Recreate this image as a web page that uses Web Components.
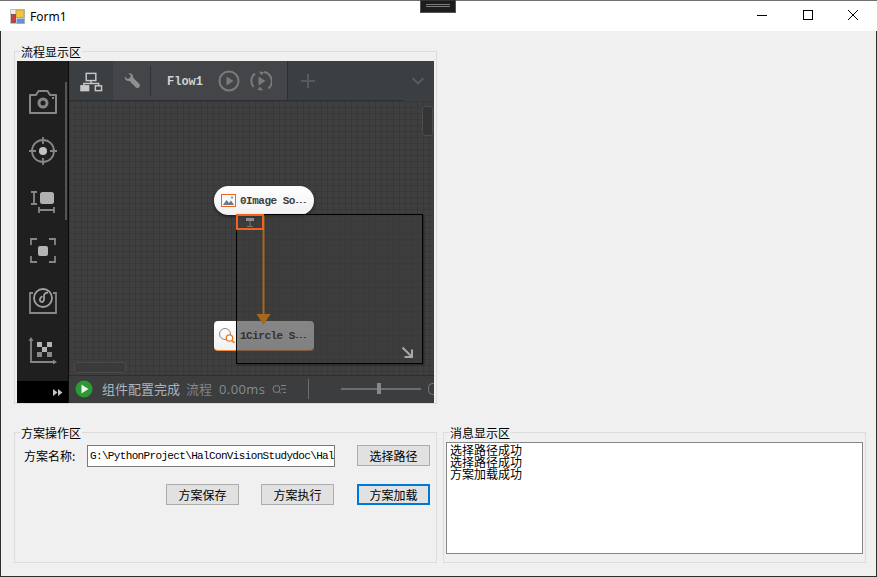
<!DOCTYPE html>
<html>
<head>
<meta charset="utf-8">
<title>Form1</title>
<style>
  html, body { margin: 0; padding: 0; width: 877px; height: 577px; overflow: hidden; background: #f0f0f0; }
  body { font: 12px "Noto Sans CJK SC", "Liberation Sans", sans-serif; color: #000; }
</style>
</head>
<body>
<form-window>
  <group-box slot="flow" label="流程显示区" style="width:421px;height:351px">
    <flow-panel></flow-panel>
  </group-box>
  <group-box slot="ops" label="方案操作区" style="width:421px;height:129px">
    <plan-form></plan-form>
  </group-box>
  <group-box slot="log" label="消息显示区" style="width:421px;height:129px">
    <message-box></message-box>
  </group-box>
</form-window>

<script>
class FormWindow extends HTMLElement {
  constructor() {
    super();
    const shadow = this.attachShadow({ mode: 'open' });
    shadow.innerHTML = `
      <style>
        :host {
          display: flex;
          flex-direction: column;
          box-sizing: border-box;
          width: 877px;
          height: 577px;
          background: #f0f0f0;
          border: solid #2e2e2e;
          border-width: 0 1px 1px 1px;
          position: relative;
        }
        .title {
          display: flex;
          align-items: center;
          height: 30px;
          background: #fff;
          border-top: 1px solid #707070;
          margin: 0 -1px 0 -1px;
          padding: 0 1px 0 10px;
          flex: none;
        }
        .title svg.logo { width: 15px; height: 15px; flex: none; }
        .title span {
          margin-left: 5px;
          font: 12px "Noto Sans", "Liberation Sans", sans-serif;
          color: #000;
          flex: 1;
        }
        .caps { display: flex; }
        .caps div { width: 46px; height: 28px; padding-bottom: 2px; display: flex; align-items: center; justify-content: center; }
        .caps div:nth-child(2) { width: 45px; }
        .caps svg { width: 12px; height: 12px; }
        .notch {
          position: absolute;
          left: 419px;
          top: 0;
          width: 34px;
          height: 11px;
          background: #1d1d1d;
          border: 1px solid #555;
          border-top-color: #333;
        }
        .notch i { display: block; height: 1px; background: #7d7d7d; margin: 3px 5px 0 5px; }
        .notch i + i { margin-top: 1px; }
        .top { padding: 20px 0 0 13px; flex: none; }
        .bottom { display: flex; padding: 28px 0 0 13px; gap: 6px; }
      </style>
      <div class="title">
        <svg class="logo" viewBox="0 0 15 15">
          <rect x="0.5" y="0.5" width="14" height="14" fill="#ececec" stroke="#c4c4c4"/>
          <rect x="6" y="1" width="8" height="7.500" fill="#f3c53a" stroke="#b99a4a" stroke-width="0.800"/>
          <rect x="1.500" y="5.500" width="4" height="8" fill="#c8403a" stroke="#8a3a36" stroke-width="0.800"/>
          <rect x="7" y="10" width="7" height="4" fill="#5f92dc" stroke="#6f8fc0" stroke-width="0.800"/>
        </svg>
        <span>Form1</span>
        <div class="caps">
          <div><svg viewBox="0 0 12 12"><path d="M1 6.500h10" stroke="#000" fill="none"/></svg></div>
          <div><svg viewBox="0 0 12 12"><rect x="1.500" y="1.500" width="9" height="9" stroke="#000" fill="none"/></svg></div>
          <div><svg viewBox="0 0 12 12"><path d="M1 1l10 10M11 1L1 11" stroke="#000" fill="none"/></svg></div>
        </div>
      </div>
      <div class="notch"><i></i><i></i></div>
      <div class="top"><slot name="flow"></slot></div>
      <div class="bottom"><slot name="ops"></slot><slot name="log"></slot></div>
    `;
  }
}

class GroupBox extends HTMLElement {
  constructor() {
    super();
    const shadow = this.attachShadow({ mode: 'open' });
    shadow.innerHTML = `
      <style>
        :host {
          display: block;
          box-sizing: content-box;
          border: 1px solid #dcdcdc;
        }
        .legend {
          height: 16px;
          line-height: 15px;
          margin: -8px 0 1px 5px;
          padding: 0 1px;
          width: fit-content;
          background: #f0f0f0;
          font-size: 12px;
          color: #000;
        }
      </style>
      <div class="legend"></div>
      <div><slot></slot></div>
    `;
    shadow.querySelector('.legend').textContent = this.getAttribute('label');
  }
}

class FlowNode extends HTMLElement {
  constructor() {
    super();
    const shadow = this.attachShadow({ mode: 'open' });
    const kind = this.getAttribute('kind');
    shadow.innerHTML = `
      <style>
        :host {
          position: absolute;
          display: flex;
          align-items: center;
          box-sizing: border-box;
          width: 100px;
          background: linear-gradient(#ffffff, #f1f1f1);
          font: bold 11px "Liberation Mono", monospace;
          letter-spacing: -0.5px;
          color: #3d3d3d;
          white-space: nowrap;
        }
        :host([kind="image"]) {
          height: 29px;
          border-radius: 15px;
          box-shadow: 0 2px 3px rgba(0,0,0,.45);
          padding-left: 7px;
        }
        :host([kind="circle"]) {
          height: 30px;
          border-radius: 4px;
          border-bottom: 1px solid #f08a3c;
          padding-left: 4px;
          color: #222;
        }
        svg { flex: none; width: 15px; height: 15px; margin-right: 4px; }
        :host([kind="circle"]) svg { width: 18px; height: 18px; margin-right: 4px; }
        ::slotted(b) { font-size: 7px; letter-spacing: -0.3px; }
      </style>
      ${kind === 'image'
        ? `<svg viewBox="0 0 15 15"><rect x="0.5" y="1.5" width="14" height="12" fill="none" stroke="#f0641e"/>
             <path d="M2 12l3.500-5 2.500 3 2-2.500 3 4.500z" fill="#6d7a8c"/><rect x="10" y="3.500" width="2" height="2" fill="#8b97a8"/></svg>`
        : `<svg viewBox="0 0 18 18"><circle cx="7" cy="7" r="5.500" fill="none" stroke="#8c8c8c"/>
             <circle cx="11.500" cy="11" r="3.200" fill="#fff" stroke="#f0751e" stroke-width="1.300"/><path d="M14 13.500l2.500 2.500" stroke="#f0751e" stroke-width="1.500"/></svg>`}
      <span><slot></slot></span>
    `;
  }
}

class FlowPanel extends HTMLElement {
  constructor() {
    super();
    const shadow = this.attachShadow({ mode: 'open' });
    const g = '#868686';
    shadow.innerHTML = `
      <style>
        :host {
          display: flex;
          width: 417px;
          height: 342px;
          margin-left: 2px;
          background: #3e3e3f;
          font: 13px "Noto Sans CJK SC", "Liberation Sans", sans-serif;
          overflow: hidden;
        }
        .side {
          width: 51px;
          flex: none;
          background: #1f1f20;
          border-right: 1px solid #0b0b0b;
          display: flex;
          flex-direction: column;
          position: relative;
        }
        .tools {
          flex: 1;
          display: flex;
          flex-direction: column;
          align-items: center;
          gap: 18px;
          padding: 24px 0 0 0;
        }
        .tools svg { width: 32px; height: 32px; flex: none; display: block; }
        .side .thumb { position: absolute; left: 48px; top: 21px; width: 2px; height: 138px; background: #555; }
        .more {
          height: 22px;
          background: #000;
          display: flex;
          align-items: center;
          justify-content: flex-end;
          padding-right: 5px;
        }
        .main { flex: 1; display: flex; flex-direction: column; min-width: 0; }
        .bar {
          height: 39px;
          flex: none;
          display: flex;
          align-items: stretch;
          background: #3b3f42;
          border-bottom: 1px solid;
          border-image: linear-gradient(90deg, #2c2e30 333px, #3d3e40 333px) 1;
        }
        .t1 { width: 44px; display: flex; align-items: center; justify-content: center; padding-top: 3px; box-sizing: border-box; }
        .t2 {
          width: 174px;
          background: #444548;
          border-right: 1px solid #2e3032;
          display: flex;
          align-items: center;
        }
        .wrench { width: 37px; display: flex; justify-content: center; }
        .sep { width: 1px; height: 30px; background: #2f3133; }
        .flow { font: bold 12px "Liberation Mono", monospace; color: #d2d2d2; margin: 2px 15px 0 16px; }
        .t2 svg.round { width: 22px; height: 22px; margin-right: 10px; }
        .plus { margin-left: 12px; width: 16px; align-self: center; height: 16px; }
        .chev { margin-left: auto; margin-right: 9px; align-self: center; width: 14px; height: 10px; }
        .canvas {
          flex: 1;
          position: relative;
          min-height: 0;
          background-color: #3f3f40;
          background-image:
            linear-gradient(rgba(0,0,0,.09) 1px, transparent 1px),
            linear-gradient(90deg, rgba(0,0,0,.09) 1px, transparent 1px);
          background-size: 6px 6px;
        }
        .vs {
          position: absolute; left: 353px; top: 5px; width: 9px; height: 28px;
          background: #343536; border: 1px solid #4c4c4d; border-radius: 3px;
        }
        .hs {
          position: absolute; left: 5px; top: 261px; width: 52px; height: 11px;
          background: #3a3a3b; border: 1px solid #4a4a4b; border-radius: 3px; box-sizing: border-box;
        }
        .mask {
          position: absolute; left: 167px; top: 113px; width: 185px; height: 148px;
          background: rgba(60,60,61,.62);
          border: 1px solid #000;
          box-shadow: 1px 1px 2px rgba(0,0,0,.4);
        }
        .mask svg { position: absolute; right: 8px; bottom: 4px; width: 13px; height: 13px; }
        .link { position: absolute; left: 187px; top: 115px; width: 16px; height: 110px; }
        .port {
          position: absolute; left: 167px; top: 113px; width: 24px; height: 12px;
          border: 2px solid #f0641e;
          display: flex; align-items: center; justify-content: center;
        }
        .port svg { width: 8px; height: 9px; display: block; }
        .status {
          height: 28px;
          box-sizing: border-box;
          flex: none;
          background: #3c3d3f;
          border-top: 1px solid #2d2e2f;
          display: flex;
          align-items: center;
          padding: 0 0 2px 6px;
          overflow: hidden;
          white-space: nowrap;
        }
        .ok { width: 18px; height: 18px; flex: none; margin-right: 9px; }
        .s1 { color: #aab4bd; }
        .s2 { color: #7f868d; margin-left: 6px; }
        .s3 { color: #858c93; margin-left: 7px; font: 13px "Open Sans", "Liberation Sans", sans-serif; letter-spacing: .4px; }
        .list { width: 14px; height: 10px; margin-left: 7px; flex: none; }
        .vsep { width: 1px; height: 20px; background: #6c6f72; margin-left: 22px; flex: none; }
        .slide { position: relative; width: 80px; height: 2px; background: #6c6f72; margin-left: 32px; flex: none; }
        .slide i { position: absolute; left: 36px; top: -5px; width: 4px; height: 11px; background: #86898c; }
        .zoom { margin-left: 7px; width: 5px; height: 10px; flex: none; border: 1px solid #75787b; border-right: 0; border-radius: 5px 0 0 5px; }
      </style>
      <div class="side">
        <div class="tools">
          <svg viewBox="0 0 32 32" fill="none" stroke="${g}" stroke-width="2">
            <path d="M3 10h6l2.500-4h9l2.500 4h6v18H3z" stroke-linejoin="round"/>
            <circle cx="16" cy="18" r="4" stroke-width="3"/><rect x="25" y="12" width="2" height="2" fill="${g}" stroke="none"/>
          </svg>
          <svg viewBox="0 0 32 32" fill="none" stroke="${g}" stroke-width="1.800">
            <circle cx="16" cy="16" r="11"/><path d="M16 2v7M16 23v7M2 16h7M23 16h7"/>
            <circle cx="16" cy="16" r="4" fill="#c2c2c2" stroke="none"/>
          </svg>
          <svg viewBox="0 0 32 32" fill="none" stroke="${g}" stroke-width="1.800">
            <path d="M4 7h6M4 19h6M7 7v12"/><rect x="13" y="7" width="14" height="12" rx="2.500" fill="#b0b0b0" stroke="none"/>
            <path d="M12 25h15M12 22v6M27 22v6"/>
          </svg>
          <svg viewBox="0 0 32 32" fill="none" stroke="${g}" stroke-width="1.800">
            <path d="M10 4H4v6M22 4h6v6M4 21v6h6M28 21v6h-6"/><rect x="11" y="11" width="10" height="10" rx="2" fill="#b4b4b4" stroke="none"/>
          </svg>
          <svg viewBox="0 0 32 32" fill="none" stroke="${g}" stroke-width="1.800">
            <path d="M6 8H3v20h26V8h-3"/><circle cx="16" cy="13" r="9" stroke="#a0a0a0"/>
            <path d="M21 7.500c-3 0-4.500 2-4 4.500 .5 3-.5 5-2 5s-2.500-1.500-2-3 1.500-1.500 2-3" stroke="#a0a0a0"/>
          </svg>
          <svg viewBox="0 0 32 32" fill="none" stroke="${g}" stroke-width="1.800">
            <path d="M4 5v22h23"/><path d="M1.500 6L4 2l2.500 4zM26 24.500l4 2.500-4 2.500z" fill="${g}" stroke="none"/>
            <g fill="#b4b4b4" stroke="none"><rect x="10" y="7" width="5" height="5"/><rect x="20" y="7" width="5" height="5"/><rect x="15" y="12" width="5" height="5"/><rect x="10" y="17" width="5" height="5" fill="#888"/><rect x="20" y="17" width="5" height="5" fill="#888"/></g>
          </svg>
        </div>
        <div class="thumb"></div>
        <div class="more">
          <svg width="10" height="7" viewBox="0 0 10 7"><path d="M0 0l4.500 3.500L0 7zM5 0l4.500 3.500L5 7z" fill="#c4c4c4"/></svg>
        </div>
      </div>
      <div class="main">
        <div class="bar">
          <div class="t1">
            <svg width="23" height="20" viewBox="0 0 24 20" fill="none" stroke="#c8c8c8" stroke-width="1.500">
              <rect x="6.500" y="1" width="10" height="7.500"/><path d="M11.500 8.500v3M4 14v-2.500h15.500V14"/>
              <rect x="1" y="14" width="8" height="5" fill="#c8c8c8"/><rect x="16" y="14" width="6.500" height="5"/>
            </svg>
          </div>
          <div class="t2">
            <div class="wrench">
              <svg width="16" height="16" viewBox="0 0 16 16"><path d="M1 3.500L3.500 6 6 5l.8-2.500L4.500 0.500C7-.5 9.500 1.500 9 4.500L15.500 11c.6 1 .4 2.500-.3 3.300-.9.900-2.300 1-3.300.2L5.500 8C2.500 8.700.2 6 1 3.500z" fill="#8f8f8f"/></svg>
            </div>
            <div class="sep"></div>
            <span class="flow">Flow1</span>
            <svg class="round" viewBox="0 0 22 22" fill="none" stroke="#7b7b7b" stroke-width="2">
              <circle cx="11" cy="11" r="9.500"/><path d="M8.500 6.500l7 4.500-7 4.500z" fill="#7b7b7b" stroke="none"/>
            </svg>
            <svg class="round" viewBox="0 0 22 22" fill="none" stroke="#7b7b7b" stroke-width="2" style="margin:0">
              <path d="M3.500 17A9.500 9.500 0 0 1 5 3.500M14 2A9.500 9.500 0 0 1 18.500 18.500"/>
              <path d="M9 1.500l5 .5-2.500 3.500zM13 20.500L7.500 20l2.500-3.500z" fill="#7b7b7b" stroke="none"/>
              <path d="M8.500 6.500l7 4.500-7 4.500z" fill="#7b7b7b" stroke="none"/>
            </svg>
          </div>
          <svg class="plus" viewBox="0 0 16 16"><path d="M8 1v14M1 8h14" stroke="#565a5c" stroke-width="2"/></svg>
          <svg class="chev" viewBox="0 0 14 10"><path d="M1.500 2L7 7.500 12.500 2" fill="none" stroke="#565a5c" stroke-width="2"/></svg>
        </div>
        <div class="canvas">
          <div class="vs"></div>
          <div class="hs"></div>
          <flow-node kind="image" style="left:145px;top:85px">0Image So<b>---</b></flow-node>
          <flow-node kind="circle" style="left:145px;top:220px">1Circle S<b>---</b></flow-node>
          <div class="mask">
            <svg viewBox="0 0 13 13"><path d="M1.500 1.500l9 9M11 3.500V11H3.500" fill="none" stroke="#a8a8a8" stroke-width="2"/></svg>
          </div>
          <svg class="link" viewBox="0 0 16 110">
            <path d="M7.500 0v99" stroke="#a5681c" stroke-width="2" fill="none"/>
            <path d="M0.500 98h14l-7 11z" fill="#a5681c"/>
          </svg>
          <div class="port">
            <svg viewBox="0 0 8 9"><path d="M0 0h8v3H0z" fill="#8e8e8e"/><path d="M3.500 3h1v5h-1z" fill="#777"/><path d="M1 8h6v1H1z" fill="#777"/></svg>
          </div>
        </div>
        <div class="status">
          <svg class="ok" viewBox="0 0 18 18">
            <circle cx="9" cy="9" r="8.500" fill="#2a9a32"/><path d="M6.500 4.500l7 4.500-7 4.500z" fill="#f1f1f1"/>
          </svg>
          <span class="s1">组件配置完成</span>
          <span class="s2">流程</span>
          <span class="s3">0.00ms</span>
          <svg class="list" viewBox="0 0 14 10" fill="none" stroke="#7f868d"><circle cx="4.500" cy="5" r="3.500"/><path d="M7 7.500l2 2M9 1.500h5M9.500 5h4.500M11 8.500h3"/></svg>
          <div class="vsep"></div>
          <div class="slide"><i></i></div>
          <div class="zoom"></div>
        </div>
      </div>
    `;
  }
}

class WinButton extends HTMLElement {
  constructor() {
    super();
    const shadow = this.attachShadow({ mode: 'open' });
    shadow.innerHTML = `
      <style>
        :host {
          display: flex;
          align-items: center;
          justify-content: center;
          box-sizing: border-box;
          width: 73px;
          height: 21px;
          background: #e1e1e1;
          border: 1px solid #adadad;
          font-size: 12px;
          color: #000;
          flex: none;
        }
        :host([focused]) { border: 2px solid #0078d7; }
      </style>
      <slot></slot>
    `;
  }
}

class PlanForm extends HTMLElement {
  constructor() {
    super();
    const shadow = this.attachShadow({ mode: 'open' });
    shadow.innerHTML = `
      <style>
        :host { display: block; padding: 3px 0 0 9px; }
        .row { display: flex; align-items: flex-start; }
        label { width: 63px; flex: none; font-size: 12px; line-height: 22px; }
        .input {
          box-sizing: border-box;
          width: 248px;
          height: 22px;
          flex: none;
          background: #fff;
          border: 1px solid #7a7a7a;
          padding-left: 2px;
          font: 11px/20px "Liberation Mono", monospace;
          letter-spacing: -0.65px;
          white-space: nowrap;
          overflow: hidden;
        }
        .row win-button { margin-left: 22px; }
        .actions { margin-top: 17px; padding-left: 142px; }
        .actions win-button:last-child { margin-left: 23px; }
      </style>
      <div class="row">
        <label>方案名称:</label>
        <div class="input">G:\\PythonProject\\HalConVisionStudydoc\\Hal</div>
        <win-button>选择路径</win-button>
      </div>
      <div class="row actions">
        <win-button style="margin-left:0">方案保存</win-button>
        <win-button>方案执行</win-button>
        <win-button focused>方案加载</win-button>
      </div>
    `;
  }
}

class MessageBox extends HTMLElement {
  constructor() {
    super();
    const shadow = this.attachShadow({ mode: 'open' });
    shadow.innerHTML = `
      <style>
        :host {
          display: block;
          box-sizing: border-box;
          width: 417px;
          height: 112px;
          margin: 0 0 0 2px;
          background: #fff;
          border: 1px solid #82878c;
          padding: 1px 3px;
          font-size: 12px;
          line-height: 12px;
        }
        div { height: 12px; }
      </style>
      <div>选择路径成功</div>
      <div>选择路径成功</div>
      <div>方案加载成功</div>
    `;
  }
}

customElements.define('form-window', FormWindow);
customElements.define('group-box', GroupBox);
customElements.define('flow-node', FlowNode);
customElements.define('flow-panel', FlowPanel);
customElements.define('win-button', WinButton);
customElements.define('plan-form', PlanForm);
customElements.define('message-box', MessageBox);
</script>
</body>
</html>
